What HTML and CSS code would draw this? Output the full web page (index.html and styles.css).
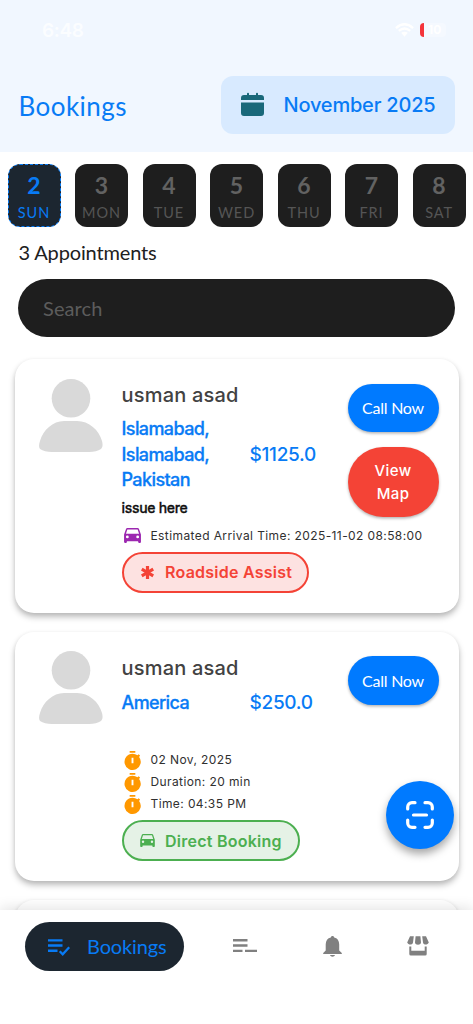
FILE: index.html
```
<!DOCTYPE html>
<html lang="en">
<head>
<meta charset="utf-8">
<meta name="viewport" content="width=device-width, initial-scale=1">
<title>Bookings</title>
<link rel="stylesheet" href="styles.css">
</head>
<body>
<svg class="defs" aria-hidden="true">
  <symbol id="person" viewBox="0 0 64 73"><circle cx="32" cy="19.3" r="19.3"/><path d="M25 42h13c12 0 22 9 25 20 .8 3 1 6-1 8-3 2-7 3-12 3H13c-5 0-9-1-12-3-1.500-2-1-5 0-8 3-11 13-20 24-20z"/></symbol>
  <symbol id="car" viewBox="3 5 18 16"><path fill-rule="evenodd" d="M18.920 6.010C18.720 5.420 18.160 5 17.500 5h-11c-.66 0-1.210.42-1.420 1.010L3 12v8c0 .55.45 1 1 1h1c.55 0 1-.45 1-1v-1h12v1c0 .55.45 1 1 1h1c.55 0 1-.45 1-1v-8l-2.080-5.990zM6.500 16a1.500 1.500 0 1 1 0-3 1.500 1.500 0 0 1 0 3zm11 0a1.500 1.500 0 1 1 0-3 1.500 1.500 0 0 1 0 3zM5 11l1.500-4.500h11L19 11z"/></symbol>
  <symbol id="timer" viewBox="0 0 18 20"><path fill-rule="evenodd" d="M6 0h6v1.800H6zM9 2.800a8.600 8.600 0 0 1 5.300 1.700l1.200-1.100 1.500 1.300-1 1.500A8.600 8.600 0 1 1 9 2.800zM8 7v6h2V7z"/></symbol>
</svg>
<div class="screen">
  <header class="header">
    <div class="status">
      <span class="clock">6:48</span>
      <span class="signals">
        <svg class="wifi" viewBox="0 0 20 14"><path d="M1 5Q10-3 19 5M4 8Q10 3 16 8" /><path class="dot" d="M6.500 10Q10 7.500 13.500 10L10 14z"/></svg>
        <span class="battery">10</span>
      </span>
    </div>
    <div class="titlebar">
      <h1 class="title">Bookings</h1>
      <button class="month">
        <svg class="calendar" viewBox="0 0 23 23"><path d="M0 7V5a3 3 0 0 1 3-3h3V.8a1 1 0 0 1 2 0V2h7V.8a1 1 0 0 1 2 0V2h3a3 3 0 0 1 3 3v2zM0 9.500h23V20a3 3 0 0 1-3 3H3a3 3 0 0 1-3-3z"/></svg>
        <span>November 2025</span>
      </button>
    </div>
  </header>
  <main class="content">
    <div class="days">
      <div class="day active"><b>2</b><span>SUN</span></div>
      <div class="day"><b>3</b><span>MON</span></div>
      <div class="day"><b>4</b><span>TUE</span></div>
      <div class="day"><b>5</b><span>WED</span></div>
      <div class="day"><b>6</b><span>THU</span></div>
      <div class="day"><b>7</b><span>FRI</span></div>
      <div class="day"><b>8</b><span>SAT</span></div>
    </div>
    <p class="count">3 Appointments</p>
    <div class="search">Search</div>
    <div class="list">
      <article class="card first">
        <svg class="avatar"><use href="#person"/></svg>
        <div class="details">
          <div class="summary">
            <div class="info">
              <h2 class="name">usman asad</h2>
              <div class="place"><span class="address">Islamabad,<br>Islamabad,<br>Pakistan</span><span class="price">$1125.0</span></div>
              <p class="issue">issue here</p>
            </div>
            <div class="actions"><button class="call">Call Now</button><button class="map">View<br>Map</button></div>
          </div>
          <div class="meta eta"><svg class="purple-car"><use href="#car"/></svg><span>Estimated Arrival Time: 2025-11-02 08:58:00</span></div>
          <div class="tag roadside"><svg class="star" viewBox="0 0 16 16"><path d="M8 1v14M1.900 4.500l12.200 7M1.900 11.500l12.200-7"/></svg><span>Roadside Assist</span></div>
        </div>
      </article>
      <article class="card second">
        <svg class="avatar"><use href="#person"/></svg>
        <div class="details">
          <div class="summary">
            <div class="info">
              <h2 class="name">usman asad</h2>
              <div class="place"><span class="address">America</span><span class="price">$250.0</span></div>
            </div>
            <div class="actions"><button class="call">Call Now</button></div>
          </div>
          <div class="times">
            <div class="meta"><svg class="timer"><use href="#timer"/></svg><span>02 Nov, 2025</span></div>
            <div class="meta"><svg class="timer"><use href="#timer"/></svg><span>Duration: 20 min</span></div>
            <div class="meta"><svg class="timer"><use href="#timer"/></svg><span>Time: 04:35 PM</span></div>
          </div>
          <div class="tag direct"><svg class="green-car"><use href="#car"/></svg><span>Direct Booking</span></div>
        </div>
      </article>
      <article class="card peek"></article>
    </div>
  </main>
  <nav class="nav">
    <div class="tab current">
      <svg class="check-list" viewBox="0 0 22 17"><path d="M0 1.400h14.500M0 6.500h14.500M0 11.700h9.500" stroke-width="2.400"/><path d="M11.700 12.300l3 3 6.500-7" stroke-width="2.300"/></svg>
      <span>Bookings</span>
    </div>
    <svg class="lines" viewBox="0 0 24 14"><path d="M0 1.200h14.500M0 6.500h14.500M0 11.900h9.500M12 11.900h12"/></svg>
    <svg class="bell" viewBox="0 0 19 21"><path d="M9.500 0c.9 0 1.600.7 1.700 1.600 3.200.7 5 3.300 5 6.900v6l2.600 2.500v1H.2v-1l2.500-2.500v-6c0-3.600 1.900-6.200 5.100-6.900C7.900.7 8.600 0 9.500 0zM7 19h5c-.4 1-1.300 1.700-2.500 1.700S7.400 20 7 19z"/></svg>
    <svg class="store" viewBox="0 0 22 20"><path d="M3 .2h3.800L6 6.500C5.500 9.500 1 9 .2 6.500zM8.600.2h4.800l.6 6.300c-.2 3-5.800 3-6 0zM15.200.2H19l2.800 6.300C21 9 16.500 9.500 16 6.500zM2.300 10.500h2v4.200h13.400v-4.200h2v7.600a1.500 1.500 0 0 1-1.500 1.500H3.800a1.500 1.500 0 0 1-1.500-1.500z"/></svg>
  </nav>
  <button class="scan" aria-label="Scan"><svg viewBox="0 0 28 28"><path d="M1.700 8V6a4.300 4.300 0 0 1 4.300-4.300h3M19 1.700h3A4.300 4.300 0 0 1 26.300 6v2M26.300 19v3a4.300 4.300 0 0 1-4.300 4.300h-3M9 26.300H6A4.300 4.300 0 0 1 1.700 22v-3M7.500 14h13"/></svg></button>
</div>
</body>
</html>
```
FILE: styles.css
```
* { box-sizing: border-box; }
body { margin: 0; background: #fff; font-family: Lato, sans-serif; }
h1, h2, p { margin: 0; font-weight: 400; }
button { border: 0; padding: 0; font-family: inherit; }
svg { display: block; flex: none; overflow: visible; }
.defs { position: absolute; width: 0; height: 0; }
.screen { position: relative; width: 473px; height: 1024px; overflow: hidden; display: flex; flex-direction: column; background: #fff; white-space: nowrap; }

.header { flex: none; height: 152px; background: #f1f7ff; }
.status { height: 60px; padding: 0 27px 0 42px; display: flex; align-items: center; justify-content: space-between; color: #fbfdff; font-family: Inter, sans-serif; }
.clock { font-size: 19px; font-weight: 600; letter-spacing: -.4px; }
.signals { display: flex; align-items: center; gap: 6px; }
.wifi { width: 19px; height: 14px; fill: none; stroke: #fff; stroke-width: 2.500; }
.wifi .dot { fill: #fff; stroke: none; }
.battery { width: 26px; height: 14px; border-left: 4px solid #f4343b; border-radius: 4px; background: #f5f9ff; font-size: 12px; line-height: 14px; font-weight: 700; padding-left: 4px; color: #fff; }
.titlebar { height: 92px; padding: 15.500px 18.500px 18.500px; display: flex; align-items: center; justify-content: space-between; }
.title { font-size: 26px; letter-spacing: .45px; color: #087bf5; line-height: 32px; padding-top: 2px; }
.month { width: 234px; height: 58px; border-radius: 12px; background: #d8eaff; display: flex; align-items: center; padding-left: 20px; gap: 20px; color: #087bf5; font: 500 20px Inter, sans-serif; letter-spacing: -.2px; }
.month span { padding-top: 1px; }
.calendar { width: 23px; height: 23px; fill: #19687a; }

.content { flex: 1; min-height: 0; overflow: hidden; }
.days { display: flex; justify-content: space-between; padding: 12px 7.500px 0; }
.day { width: 53px; height: 63px; border-radius: 12px; background: #1e1e1e; color: #626262; display: flex; flex-direction: column; align-items: center; }
.day b { font: 700 23px/24px Lato, sans-serif; margin-top: 9px; }
.day span { font-size: 14.500px; line-height: 18px; letter-spacing: .9px; margin-top: 7px; color: #555; }
.day.active { background: #1c2630; border: 1px dashed #087bf5; color: #087bf5; }
.day.active b { margin-top: 8px; }
.day.active span { color: #087bf5; }
.count { margin: 13px 0 0 18.500px; font-size: 20px; line-height: 25px; color: #202020; letter-spacing: -.15px; }
.search { margin: 14px 18.500px 0 18px; height: 58px; border-radius: 29px; background: #1e1e1e; color: #5c5c5c; font-size: 20px; line-height: 59px; padding-left: 25px; letter-spacing: .1px; }

.list { padding: 22px 14.500px 0; display: flex; flex-direction: column; gap: 19px; }
.card { flex: none; border-radius: 19px; background: #fff; box-shadow: 0 4px 6px rgba(0,0,0,.26), 0 1px 4px rgba(0,0,0,.06); display: flex; padding: 19.500px 20px 0 24px; gap: 19px; }
.first { height: 253.500px; }
.second { height: 249px; }
.second .place { margin-top: 8px; }
.peek { height: 240px; }
.avatar { width: 64px; height: 73px; fill: #d9d9d9; }
.details { width: 317px; padding-top: 2.500px; }
.summary { display: flex; justify-content: space-between; }
.info { width: 200px; }
.name { font: 500 20px/28px Inter, sans-serif; color: #424242; letter-spacing: .2px; }
.place { display: grid; grid-template-columns: 128px 1fr; align-items: center; margin-top: 7px; color: #087bf5; font: 500 18px/25.500px Inter, sans-serif; }
.address { letter-spacing: -.6px; -webkit-text-stroke: .3px currentColor; }
.price { font-size: 19px; letter-spacing: -.3px; }
.issue { font: 500 14px/20px Inter, sans-serif; margin-top: 5px; color: #111; letter-spacing: -.3px; -webkit-text-stroke: .3px currentColor; }
.actions { width: 91px; padding-top: 2.500px; display: flex; flex-direction: column; gap: 14.500px; }
.actions button { width: 91px; color: #fff; box-shadow: 0 1.500px 3px rgba(0,0,0,.3); }
.call { height: 48.500px; border-radius: 25px; background: #007aff; font-size: 16px; letter-spacing: -.25px; }
.map { height: 70px; border-radius: 35px; background: #f44336; font: 500 15px/23px Inter, sans-serif; letter-spacing: .4px; }
.meta { height: 22px; display: flex; align-items: center; gap: 10px; padding-left: 2px; color: #303030; font: 400 12px/22px Inter, sans-serif; letter-spacing: .4px; }
.eta { margin-top: 7px; }
.purple-car { width: 17px; height: 15px; fill: #9c27b0; }
.timer { width: 17px; height: 19px; fill: #ff9800; }
.times { margin-top: 34px; }
.tag { height: 41px; margin-top: 5px; border: 2px solid #f44336; border-radius: 21px; display: flex; align-items: center; gap: 10px; padding-left: 16.500px; font: 600 16px Inter, sans-serif; letter-spacing: .25px; }
.roadside { width: 187px; background: #fde2e1; color: #f44336; }
.direct { width: 178px; background: #e5f2e6; border-color: #4caf50; color: #4caf50; }
.star { width: 15px; height: 15px; stroke: #f44336; stroke-width: 3.400; }
.green-car { width: 15px; height: 13px; fill: #4caf50; }

.nav { flex: none; position: relative; height: 114px; background: #fff; box-shadow: 0 -3px 12px rgba(0,0,0,.1); display: flex; align-items: flex-start; padding: 12px 25px; fill: #808080; }
.tab { width: 159px; height: 49px; border-radius: 25px; background: #1c2630; color: #087bf5; display: flex; align-items: center; gap: 17px; padding-left: 23px; font-size: 20px; letter-spacing: -.15px; }
.tab span { padding-bottom: 1px; }
.check-list { width: 22px; height: 17px; fill: none; stroke: #087bf5; margin-top: 1px; }
.lines { width: 24px; height: 14px; margin: 17px 0 0 48.500px; stroke: #808080; stroke-width: 2.400; }
.bell { width: 19px; height: 21px; margin: 14px 0 0 66px; }
.store { width: 22px; height: 20px; margin: 14px 0 0 65px; }
.scan { position: absolute; left: 385.500px; top: 781px; width: 68px; height: 68px; border-radius: 50%; background: #007aff; display: grid; place-items: center; box-shadow: 0 5px 9px rgba(0,0,0,.35); }
.scan svg { width: 28px; height: 28px; fill: none; stroke: #fff; stroke-width: 3.200; stroke-linecap: round; }
```
